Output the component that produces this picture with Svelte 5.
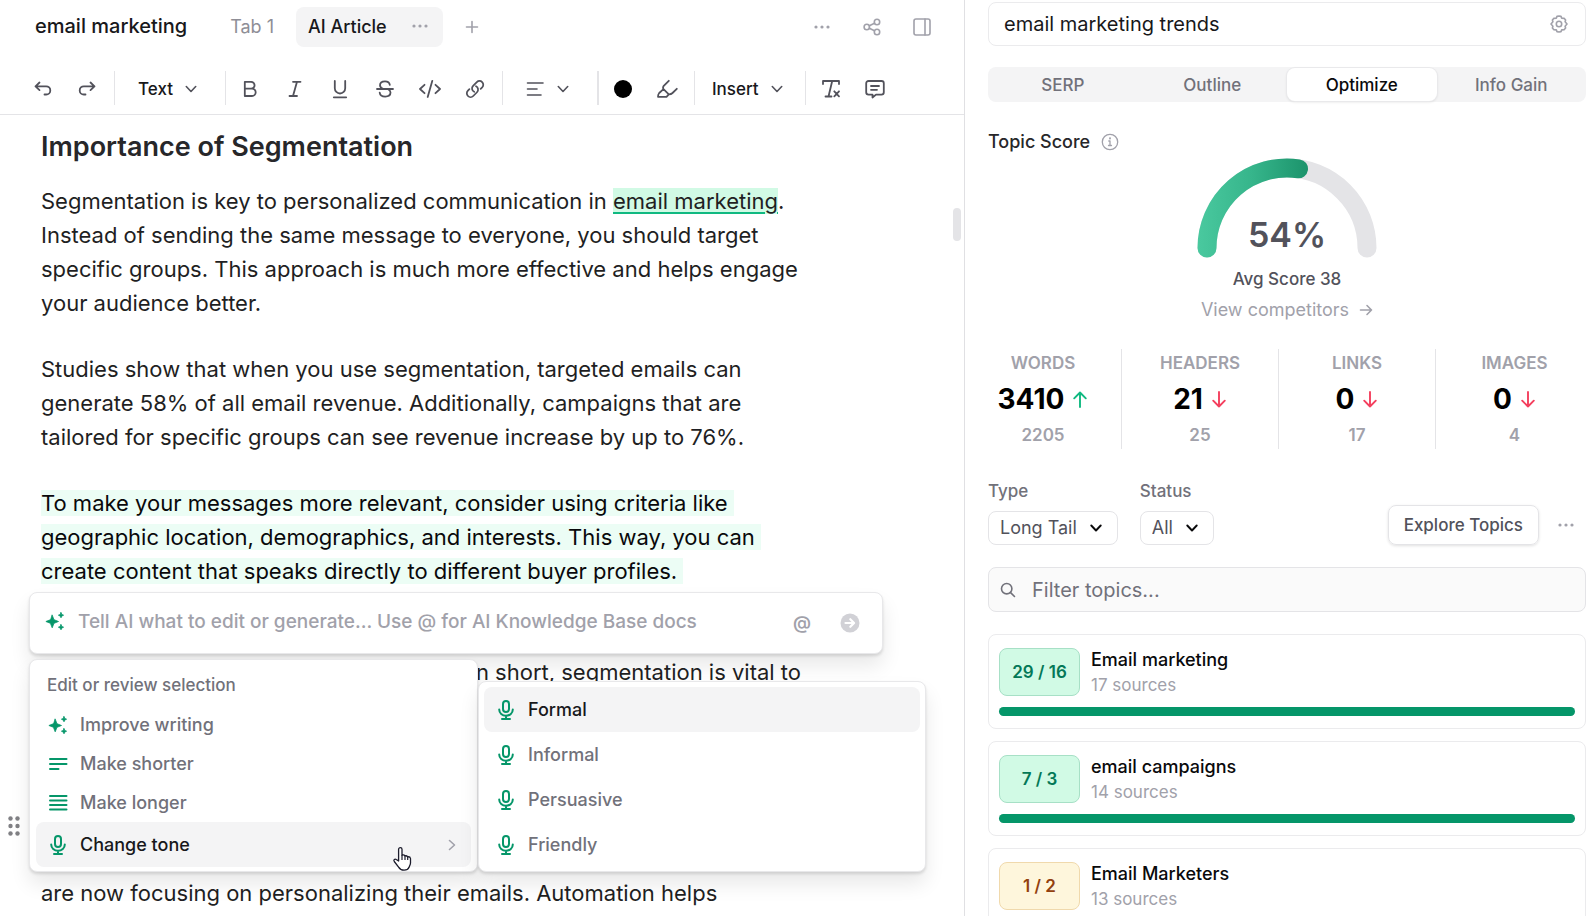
<script>
  const tabs = ['SERP', 'Outline', 'Optimize', 'Info Gain'];
  let activeTab = $state('Optimize');

  const stats = [
    { label: 'WORDS', value: '3410', target: '2205', up: true },
    { label: 'HEADERS', value: '21', target: '25', up: false },
    { label: 'LINKS', value: '0', target: '17', up: false },
    { label: 'IMAGES', value: '0', target: '4', up: false }
  ];

  const topics = [
    { name: 'Email marketing', count: '29 / 16', sources: '17 sources', tone: 'good', fill: 100 },
    { name: 'email campaigns', count: '7 / 3', sources: '14 sources', tone: 'good', fill: 100 },
    { name: 'Email Marketers', count: '1 / 2', sources: '13 sources', tone: 'warn', fill: 50 }
  ];

  const actions = [
    { icon: 'sparkle', label: 'Improve writing' },
    { icon: 'short', label: 'Make shorter' },
    { icon: 'long', label: 'Make longer' },
    { icon: 'mic', label: 'Change tone', open: true }
  ];

  const tones = ['Formal', 'Informal', 'Persuasive', 'Friendly'];

  let query = $state('email marketing trends');
</script>

{#snippet dots()}
  <svg class="ic" width="18" height="18" viewBox="0 0 18 18" fill="currentColor">
    <circle cx="3" cy="9" r="1.6" /><circle cx="9" cy="9" r="1.6" /><circle cx="15" cy="9" r="1.6" />
  </svg>
{/snippet}

{#snippet chevron()}
  <svg class="ic" width="12" height="12" viewBox="0 0 12 12"><path d="M1.3 3.5 6 8.5l4.700-5" /></svg>
{/snippet}

{#snippet glyph(name)}
  <svg class="ic green" width="20" height="20" viewBox="0 0 20 20">
    {#if name === 'sparkle'}
      <g fill="currentColor" stroke="currentColor" stroke-width=".8">
        <path d="M7.200 4.200 9 8.700l4.500 1.800L9 12.300l-1.800 4.500-1.800-4.500L.9 10.500l4.500-1.800Z" />
        <path d="M16 1.600l.8 1.800 1.800.8-1.800.8-.8 1.800-.8-1.800-1.800-.8 1.800-.8Z" />
        <path d="M16 13.600l.8 1.800 1.800.8-1.800.8-.8 1.800-.8-1.800-1.800-.8 1.800-.8Z" />
      </g>
    {:else if name === 'short'}
      <path d="M2 5h16.500M2 10h16.500M2 15h8.500" />
    {:else if name === 'long'}
      <path d="M2 3h16.500M2 7.500h16.500M2 12h16.500M2 16.500h16.500" />
    {:else}
      <rect x="7" y="1" width="6" height="11" rx="3" />
      <path d="M3.200 9.500a6.800 6.300 0 0 0 13.600 0M10 15.800v3M6 19h8" />
    {/if}
  </svg>
{/snippet}

<div class="app">
  <main class="editor">
    <header class="topbar">
      <h1>email marketing</h1>
      <nav class="doc-tabs" aria-label="Document tabs">
        <button class="doc-tab">Tab 1</button>
        <button class="doc-tab on">AI Article <span class="muted">{@render dots()}</span></button>
        <button class="doc-add" aria-label="Add tab">
          <svg class="ic" width="14" height="14" viewBox="0 0 14 14"><path d="M7 1.500v11M1.500 7h11" /></svg>
        </button>
      </nav>
      <div class="top-actions">
        <button aria-label="More">{@render dots()}</button>
        <button aria-label="Share">
          <svg class="ic" width="18" height="18" viewBox="0 0 18 18">
            <circle cx="3.800" cy="9" r="2.700" /><circle cx="14" cy="4" r="2.700" /><circle cx="14" cy="14" r="2.700" />
            <path d="M6.300 7.800l5.200-2.600M6.300 10.200l5.200 2.600" />
          </svg>
        </button>
        <button aria-label="Toggle side panel">
          <svg class="ic" width="18" height="18" viewBox="0 0 18 18">
            <rect x="1" y="1" width="16" height="16" rx="2" /><path d="M12 1v16" />
          </svg>
        </button>
      </div>
    </header>

    <div class="toolbar" role="toolbar" aria-label="Formatting">
      <div class="group history">
        <button aria-label="Undo">
          <svg class="ic" width="18" height="18" viewBox="0 0 18 18"><path d="M5.500 2.500 1.500 6.300l4 3.800M1.500 6.300h10.700a4.100 4.100 0 0 1 0 8.200H10.500" /></svg>
        </button>
        <button aria-label="Redo">
          <svg class="ic" width="18" height="18" viewBox="0 0 18 18"><path d="M12.500 2.500l4 3.800-4 3.800M16.500 6.300H5.800a4.100 4.100 0 0 0 0 8.200h1.700" /></svg>
        </button>
      </div>
      <div class="group">
        <button class="drop">Text {@render chevron()}</button>
      </div>
      <div class="group marks">
        <button aria-label="Bold">
          <svg class="ic" width="20" height="20" viewBox="0 0 20 20"><path d="M4.800 2.800h6.400a3.400 3.400 0 0 1 0 6.800H4.800zM4.800 9.600h7.200a3.700 3.700 0 0 1 0 7.400H4.800z" /></svg>
        </button>
        <button aria-label="Italic">
          <svg class="ic" width="20" height="20" viewBox="0 0 20 20"><path d="M8 2.800h7.500M4.500 17H12M12 2.800 8 17" /></svg>
        </button>
        <button aria-label="Underline">
          <svg class="ic" width="20" height="20" viewBox="0 0 20 20"><path d="M4.800 2v7.300a5.200 5.200 0 0 0 10.400 0V2M3.800 18.300h12.400" /></svg>
        </button>
        <button aria-label="Strikethrough">
          <svg class="ic" width="20" height="20" viewBox="0 0 20 20"><path d="M2 10h16M14.800 5.800C14.500 3.600 12.700 2.300 10 2.300c-3 0-5 1.500-5 3.900 0 1.800 1.200 3 3.500 3.800M13.500 10.500c1.400.8 2 1.800 2 3.100 0 2.400-2.100 4-5.300 4-3.100 0-5.200-1.500-5.500-4" /></svg>
        </button>
        <button aria-label="Code">
          <svg class="ic" width="22" height="20" viewBox="0 0 22 20"><path d="M5.500 5.800 1 10l4.500 4.200M16.500 5.800 21 10l-4.500 4.200M13.300 1.800 8.700 18" /></svg>
        </button>
        <button aria-label="Link">
          <svg class="ic link" width="20" height="20" viewBox="0 0 24 24">
            <path d="M13.200 8.700a4.500 4.500 0 0 1 1.200 7.200l-4.500 4.500a4.500 4.500 0 0 1-6.400-6.400l1.800-1.800M18.800 11.800l1.800-1.700a4.500 4.500 0 0 0-6.400-6.400L9.700 8.200a4.500 4.500 0 0 0 1.300 7.200" />
          </svg>
        </button>
      </div>
      <div class="group align">
        <button class="drop" aria-label="Alignment">
          <svg class="ic" width="18" height="18" viewBox="0 0 18 18"><path d="M1.500 3h15.500M1.500 9h9.500M1.500 15h13.500" /></svg>
          {@render chevron()}
        </button>
      </div>
      <div class="group colors">
        <button aria-label="Text color"><span class="swatch"></span></button>
        <button aria-label="Highlight">
          <svg class="ic" width="22" height="20" viewBox="0 0 22 20"><path d="M12.800 1.800 7.500 7.200Q6.600 8.600 7.500 10.200L3.200 14Q2 15.300 2 17.800H10.500L12.800 15.300Q15 15.400 16.500 14L20.800 9.800M7.500 10.200l5.300 5.100" /></svg>
        </button>
      </div>
      <div class="group insert">
        <button class="drop">Insert {@render chevron()}</button>
      </div>
      <div class="group extras">
        <button aria-label="Clear formatting">
          <svg class="ic" width="20" height="20" viewBox="0 0 20 20"><path d="M2 5V2h16v3M11.200 2 7.500 17.500M4.500 17.500h6M13.300 12.300l4.700 5M18 12.300l-4.700 5" /></svg>
        </button>
        <button aria-label="Comment">
          <svg class="ic" width="20" height="20" viewBox="0 0 20 20"><path d="M3.500 2h13a2.300 2.300 0 0 1 2.300 2.300v9a2.300 2.300 0 0 1-2.300 2.300H11L7.500 18.500v-2.900h-4a2.300 2.300 0 0 1-2.300-2.300v-9A2.300 2.300 0 0 1 3.500 2zM6 7h8M6 10.800h6" /></svg>
        </button>
      </div>
    </div>

    <article class="doc">
      <h2>Importance of Segmentation</h2>
      <p>
        Segmentation is key to personalized communication in <mark class="term">email marketing</mark>.<br />
        Instead of sending the same message to everyone, you should target<br />
        specific groups. This approach is much more effective and helps engage<br />
        your audience better.
      </p>
      <p>
        Studies show that when you use segmentation, targeted emails can<br />
        generate 58% of all email revenue. Additionally, campaigns that are<br />
        tailored for specific groups can see revenue increase by up to 76%.
      </p>
      <p>
        <mark class="picked">To make your messages more relevant, consider using criteria like<br />
        geographic location, demographics, and interests. This way, you can<br />
        create content that speaks directly to different buyer profiles.</mark>
      </p>
      <p class="closing">In short, segmentation is vital to</p>
      <p class="next-section">are now focusing on personalizing their emails. Automation helps</p>
    </article>

    <span class="thumb"></span>

    <button class="handle" aria-label="Drag block">
      <svg class="ic" width="14" height="22" viewBox="0 0 14 22" fill="currentColor">
        <circle cx="3.500" cy="3.500" r="2.200" /><circle cx="10.500" cy="3.500" r="2.200" />
        <circle cx="3.500" cy="11" r="2.200" /><circle cx="10.500" cy="11" r="2.200" />
        <circle cx="3.500" cy="18.500" r="2.200" /><circle cx="10.500" cy="18.500" r="2.200" />
      </svg>
    </button>

    <form class="prompt float" onsubmit={(e) => e.preventDefault()}>
      {@render glyph('sparkle')}
      <input aria-label="AI prompt" placeholder="Tell AI what to edit or generate... Use @ for AI Knowledge Base docs" />
      <button type="button" aria-label="Mention a document" class="at">@</button>
      <button aria-label="Send">
        <svg class="ic send" width="20" height="20" viewBox="0 0 20 20">
          <circle cx="10" cy="10" r="9.500" fill="#d1d1d6" stroke="none" />
          <path d="M5.500 10h8.500M10.300 6.200 14.100 10l-3.800 3.800" stroke="#fff" />
        </svg>
      </button>
    </form>

    <div class="edit-menu float">
      <div class="menu-title">Edit or review selection</div>
      {#each actions as action}
        <button class="item" class:on={action.open}>
          {@render glyph(action.icon)}
          <span>{action.label}</span>
          {#if action.open}
            <svg class="ic next" width="10" height="12" viewBox="0 0 10 12"><path d="M2.500 1.500 7.500 6l-5 4.500" /></svg>
          {/if}
        </button>
      {/each}
      <svg class="pointer" width="20" height="26" viewBox="0 0 20 26">
        <path
          d="M6.600 15V3.300a1.700 1.700 0 0 1 3.400 0V9.200q1.900-.8 3 .7 1.700-.5 2.600.9 2.500-.4 2.900 1.700v4.600c0 1.500-1.100 2.700-1.400 4.200-.8 1.900-2.500 2.900-5 2.900-2.900 0-4.300-1-5.500-3.100L2.300 15.500C1 13.600 3 12.500 4.300 13.500z"
          fill="#fff" stroke="#1b1b2b" stroke-width="1.300" stroke-linejoin="round" />
        <path d="M10 9v5M13 10v4M15.700 11v3" fill="none" stroke="#1b1b2b" stroke-width="1.200" />
      </svg>
    </div>

    <div class="tone-menu float">
      {#each tones as tone, i}
        <button class="item" class:on={i === 0}>
          {@render glyph('mic')}
          <span>{tone}</span>
        </button>
      {/each}
    </div>
  </main>

  <aside class="panel">
    <div class="keyword">
      <input aria-label="Keyword" bind:value={query} />
      <button aria-label="Settings">
        <svg class="ic" width="18" height="18" viewBox="0 0 18 18">
          <path d="M9 1l2 .4.7 1.700 2.600.3 1.300 1.600-.5 1.800L17 9l-1.900 2.200.5 1.800-1.300 1.600-2.600.3-.7 1.700L9 17l-2-.4-.7-1.700-2.600-.3L2.400 13l.5-1.800L1 9l1.900-2.200L2.400 5l1.300-1.600 2.600-.3L7 1.400z" />
          <circle cx="9" cy="9" r="2.700" />
        </svg>
      </button>
    </div>

    <div class="segments" role="tablist">
      {#each tabs as tab}
        <button role="tab" aria-selected={tab === activeTab} class:on={tab === activeTab} onclick={() => (activeTab = tab)}>{tab}</button>
      {/each}
    </div>

    <h2 class="score-title">
      Topic Score
      <svg class="ic" width="18" height="18" viewBox="0 0 18 18">
        <circle cx="9" cy="9" r="7.700" /><path d="M7.800 8H9v4.500M7.500 12.500h3" /><circle cx="9" cy="5.400" r=".4" />
      </svg>
    </h2>

    <section class="score">
      <svg class="gauge" width="180" height="100" viewBox="0 0 180 100">
        <defs>
          <linearGradient id="arc" gradientUnits="userSpaceOnUse" x1="0" y1="0" x2="110" y2="0">
            <stop offset="0" stop-color="#4ac99f" /><stop offset=".5" stop-color="#36b58b" /><stop offset="1" stop-color="#1c946c" />
          </linearGradient>
        </defs>
        <path d="M10 90a80 80 0 0 1 160 0" fill="none" stroke="#e4e4e7" stroke-width="19" stroke-linecap="round" />
        <path d="M10 90A80 80 0 0 1 101.500 10.800" fill="none" stroke="url(#arc)" stroke-width="19" stroke-linecap="round" />
      </svg>
      <strong>54%</strong>
      <span class="avg">Avg Score 38</span>
      <a href="#competitors">View competitors
        <svg class="ic" width="14" height="14" viewBox="0 0 14 14"><path d="M1.500 7h11M8 2.500 12.500 7 8 11.500" /></svg>
      </a>
    </section>

    <section class="stats">
      {#each stats as s}
        <div class="stat">
          <span>{s.label}</span>
          <b>{s.value}
            <svg class="ic" class:up={s.up} width="16" height="18" viewBox="0 0 16 18">
              <path d={s.up ? 'M8 17V2.500M2.200 8.300 8 2.500l5.800 5.800' : 'M8 2v14.500M2.200 10.700 8 16.500l5.800-5.800'} />
            </svg>
          </b>
          <span>{s.target}</span>
        </div>
      {/each}
    </section>

    <div class="filters">
      <label>Type
        <span class="select"><select><option>Long Tail</option></select>{@render chevron()}</span>
      </label>
      <label>Status
        <span class="select"><select><option>All</option></select>{@render chevron()}</span>
      </label>
      <button class="explore">Explore Topics</button>
      <button class="more" aria-label="More options">{@render dots()}</button>
    </div>

    <label class="search">
      <svg class="ic" width="16" height="16" viewBox="0 0 16 16"><circle cx="6.700" cy="6.700" r="5.200" /><path d="M10.600 10.600 14.500 14.500" /></svg>
      <input aria-label="Filter topics" placeholder="Filter topics..." />
    </label>

    <ul class="topics">
      {#each topics as t}
        <li>
          <div class="row">
            <span class="badge {t.tone}">{t.count}</span>
            <div class="info">
              <span class="name">{t.name}</span>
              <span class="sources">{t.sources}</span>
            </div>
          </div>
          <div class="bar"><div class="fill {t.tone}" style="width: {t.fill}%"></div></div>
        </li>
      {/each}
    </ul>
  </aside>
</div>

<style>
  :global(body) {
    margin: 0;
    overflow: hidden;
    background: #fff;
  }

  .app {
    display: grid;
    grid-template-columns: minmax(0, 1fr) 628px;
    height: 100vh;
    overflow: hidden;
    font-family: Inter, 'Liberation Sans', sans-serif;
    font-size: 17px;
    color: #18181b;
  }

  .app * {
    box-sizing: border-box;
  }

  button,
  input,
  select {
    font: inherit;
    color: inherit;
    border: 0;
    background: none;
    padding: 0;
    margin: 0;
    outline: 0;
  }

  button {
    cursor: pointer;
    display: inline-flex;
    align-items: center;
    justify-content: center;
  }

  h1,
  h2,
  p,
  ul {
    margin: 0;
    padding: 0;
  }

  .ic {
    display: block;
    flex: none;
    fill: none;
    stroke: currentColor;
    stroke-width: 1.6;
    stroke-linecap: round;
    stroke-linejoin: round;
  }

  .ic[fill='currentColor'] {
    fill: currentColor;
    stroke: none;
  }

  .green {
    color: #059669;
    stroke-width: 2;
  }

  /* Editor */
  .editor {
    position: relative;
    min-width: 0;
    overflow: hidden;
    border-right: 1px solid #e0e0e3;
  }

  .topbar {
    display: flex;
    align-items: center;
    height: 54px;
    padding: 0 33px 0 35px;
  }

  h1 {
    padding-bottom: 2px;
    font-size: 20px;
    line-height: 24px;
    font-weight: 500;
  }

  .doc-tabs {
    display: flex;
    align-items: center;
    margin-left: 31px;
    color: #8e8e96;
    font-size: 18px;
  }

  .doc-tab {
    height: 40px;
    padding: 0 12px 2px;
    border-radius: 8px;
    gap: 24px;
    margin-right: 10px;
  }

  .doc-tab.on {
    background: #f4f4f5;
    color: #18181b;
    font-weight: 500;
    padding-right: 14px;
  }

  .muted,
  .doc-add,
  .top-actions {
    color: #a1a1aa;
  }

  .doc-add {
    width: 38px;
    height: 38px;
  }

  .top-actions {
    display: flex;
    gap: 32px;
    margin-left: auto;
  }

  .toolbar {
    display: flex;
    align-items: center;
    height: 61px;
    padding: 8px 0 0;
    border-bottom: 1px solid #e4e4e7;
    color: #52525b;
  }

  .toolbar .ic {
    stroke-width: 1.8;
  }

  .toolbar .link {
    stroke-width: 2.1;
  }

  .group {
    display: flex;
    align-items: center;
    flex: none;
    height: 34px;
    border-right: 1px solid #e4e4e7;
  }

  .group button {
    width: 44px;
    height: 34px;
    padding: 2px 0 0;
  }

  .history {
    padding: 0 5px 0 21px;
  }

  .marks {
    padding: 0 4px 0 2px;
  }

  .marks button {
    width: 45px;
  }

  .group.align {
    border-right-width: 2px;
  }

  .colors {
    padding: 0 5px 0 2px;
  }

  .extras {
    border-right: 0;
    padding-left: 3px;
  }

  .group .drop {
    width: auto;
    padding: 2px 28px 0 23px;
    gap: 12px;
    color: #18181b;
    font-weight: 500;
  }

  .drop .ic {
    color: #52525b;
  }

  .group.align .drop {
    padding: 2px 28px 0 23px;
    gap: 13px;
  }

  .toolbar .drop .ic {
    stroke-width: 1.6;
  }

  .group.insert .drop {
    padding: 2px 22px 0 17px;
  }

  .swatch {
    width: 18px;
    height: 18px;
    border-radius: 50%;
    background: #000;
  }

  .doc {
    padding: 15px 120px 0 41px;
    font-size: 22px;
    line-height: 34px;
    color: #1f1f23;
    white-space: nowrap;
  }

  .doc h2 {
    font-size: 27px;
    font-weight: 600;
    line-height: 34px;
    color: #27272a;
    margin-bottom: 20px;
  }

  .doc p + p {
    margin-top: 32px;
  }

  .doc .closing {
    margin-top: 67px;
    padding-left: 429px;
  }

  .doc .next-section {
    margin-top: 187px;
  }

  mark {
    color: inherit;
    background: #d1fae5;
  }

  .term {
    text-decoration: underline #10b981 2px;
    text-underline-offset: 3px;
  }

  .picked {
    background: #ecfdf5;
    color: #09090b;
    padding-right: 6px;
    -webkit-box-decoration-break: clone;
    box-decoration-break: clone;
  }

  .thumb {
    position: absolute;
    top: 208px;
    right: 3px;
    width: 8px;
    height: 33px;
    border-radius: 4px;
    background: #e4e4e7;
  }

  .handle {
    position: absolute;
    top: 815px;
    left: 7px;
    color: #808084;
  }

  .float {
    position: absolute;
    left: 29px;
    background: #fff;
    border: 1px solid #e8e8ea;
    border-radius: 8px;
    box-shadow: 0 12px 20px rgba(0, 0, 0, 0.09), 0 2px 3px rgba(0, 0, 0, 0.12);
  }

  .prompt {
    top: 592px;
    right: 81px;
    height: 62px;
    display: flex;
    align-items: center;
    padding: 0 22px 4px 15px;
    gap: 13px;
  }

  .prompt input {
    flex: 1;
    min-width: 0;
    font-size: 19px;
    font-weight: 500;
  }

  .prompt input::placeholder {
    color: #a1a1aa;
    opacity: 1;
  }

  .prompt button {
    padding-top: 4px;
  }

  .prompt .at {
    padding-top: 2px;
    color: #a1a1aa;
    font-size: 18px;
    font-weight: 600;
    margin-right: 16px;
  }

  .send {
    stroke-width: 2.2;
  }

  .edit-menu {
    top: 659px;
    width: 449px;
    padding: 6px 6px 4px;
  }

  .menu-title {
    padding: 9px 11px;
    line-height: 21px;
    font-weight: 500;
    color: #71717a;
  }

  .item {
    display: flex;
    justify-content: flex-start;
    width: 100%;
    height: 39px;
    padding: 0 14px 0 12px;
    gap: 12px;
    border-radius: 8px;
    font-size: 18px;
    font-weight: 500;
    color: #71717a;
  }

  .item.on,
  .tone-menu .item {
    height: 45px;
  }

  .item.on {
    background: #f4f4f5;
    color: #18181b;
  }

  .next {
    margin-left: auto;
    color: #a1a1aa;
  }

  .pointer {
    position: absolute;
    right: 65px;
    bottom: -1px;
  }

  .tone-menu {
    top: 681px;
    left: 478px;
    width: 448px;
    padding: 5px 5px 4px;
  }

  /* Side panel */
  .panel {
    min-width: 0;
    padding: 2px 7px 0 23px;
    overflow: hidden;
  }

  .keyword,
  .search {
    display: flex;
    align-items: center;
    height: 44px;
    padding: 0 17px 0 15px;
    border: 1px solid #ebebed;
    border-radius: 8px;
    font-size: 20px;
  }

  .keyword input,
  .search input {
    flex: 1;
    min-width: 0;
  }

  .keyword button {
    color: #a1a1aa;
  }

  .segments {
    display: grid;
    grid-template-columns: repeat(4, 1fr);
    height: 35px;
    margin-top: 21px;
    padding: 1px 0;
    border-radius: 8px;
    background: #f4f4f5;
  }

  .segments button {
    border-radius: 8px;
    font-weight: 500;
    color: #71717a;
  }

  .segments .on {
    background: #fff;
    color: #09090b;
    box-shadow: 0 0 0 1px #e9e9eb, 0 1px 3px rgba(0, 0, 0, 0.12);
  }

  .score-title {
    display: flex;
    align-items: center;
    gap: 11px;
    margin-top: 29px;
    font-size: 18px;
    line-height: 22px;
    font-weight: 500;
    color: #27272a;
  }

  .score-title .ic {
    color: #a1a1aa;
    stroke-width: 1.3;
  }

  .score {
    display: flex;
    flex-direction: column;
    align-items: center;
    margin-top: 5px;
  }

  .score strong {
    margin-top: -43px;
    font-size: 34px;
    line-height: 40px;
    font-weight: 600;
    color: #52525b;
  }

  .avg {
    margin-top: 14px;
    line-height: 20px;
    font-weight: 500;
    color: #52525b;
  }

  .score a {
    display: flex;
    align-items: center;
    gap: 10px;
    margin-top: 10px;
    line-height: 22px;
    font-size: 18px;
    color: #a1a1aa;
    text-decoration: none;
  }

  .stats {
    display: grid;
    grid-template-columns: repeat(4, 1fr);
    margin: 28px -7px 0 -23px;
  }

  .stat {
    display: flex;
    flex-direction: column;
    align-items: center;
    justify-content: space-between;
    height: 100px;
    padding: 4px 0;
    border-right: 1px solid #e4e4e7;
    line-height: 20px;
    font-weight: 600;
    color: #a1a1aa;
  }

  .stat:last-child {
    border-right: 0;
  }

  .stat b {
    display: flex;
    align-items: center;
    gap: 8px;
    font-size: 28px;
    line-height: 32px;
    font-weight: 700;
    color: #000;
  }

  .stat .ic {
    color: #f43f5e;
    stroke-width: 1.9;
  }

  .stat .ic.up {
    color: #10b981;
  }

  .filters {
    display: flex;
    align-items: flex-end;
    margin-top: 32px;
  }

  .filters label {
    display: flex;
    flex-direction: column;
    gap: 10px;
    margin-right: 22px;
    line-height: 20px;
    font-weight: 500;
    color: #71717a;
  }

  .select {
    display: flex;
    align-items: center;
    height: 34px;
    padding: 0 15px 0 11px;
    gap: 13px;
    border: 1px solid #e4e4e7;
    border-radius: 8px;
    font-size: 18px;
    font-weight: 400;
    color: #52525b;
  }

  .select .ic {
    color: #09090b;
    stroke-width: 1.9;
  }

  select {
    appearance: none;
    field-sizing: content;
  }

  .explore {
    height: 40px;
    margin-left: auto;
    padding: 0 15px;
    border: 1px solid #e4e4e7;
    border-radius: 8px;
    box-shadow: 0 1px 3px rgba(0, 0, 0, 0.12);
    font-weight: 500;
    color: #52525b;
  }

  .more {
    width: 18px;
    height: 40px;
    margin: 0 11px 0 18px;
    color: #a1a1aa;
  }

  .search {
    height: 45px;
    margin-top: 22px;
    padding: 0 11px;
    gap: 16px;
    border-color: #e4e4e7;
    background: #fafafa;
    color: #71717a;
  }

  .search input::placeholder {
    color: #71717a;
    opacity: 1;
  }

  .topics {
    display: grid;
    gap: 12px;
    margin-top: 22px;
    list-style: none;
  }

  .topics li {
    padding: 13px 10px 12px;
    border: 1px solid #ebebed;
    border-radius: 8px;
  }

  .row {
    display: flex;
    gap: 11px;
  }

  .badge {
    display: flex;
    align-items: center;
    justify-content: center;
    width: 81px;
    height: 48px;
    border: 1px solid #a7e0c6;
    border-radius: 8px;
    background: #d1fae5;
    font-weight: 600;
    color: #047857;
  }

  .badge.warn {
    border-color: #f0d9ac;
    background: #fef6dc;
    color: #92400e;
  }

  .info {
    display: flex;
    flex-direction: column;
    gap: 3px;
  }

  .name {
    font-size: 18px;
    line-height: 24px;
    font-weight: 500;
    color: #09090b;
  }

  .sources {
    line-height: 20px;
    color: #a1a1aa;
  }

  .bar {
    margin-top: 11px;
    border-radius: 5px;
    background: #e4e4e7;
  }

  .fill {
    height: 9px;
    border-radius: 5px;
    background: #059669;
  }

  .fill.warn {
    background: #f59e0b;
  }
</style>
